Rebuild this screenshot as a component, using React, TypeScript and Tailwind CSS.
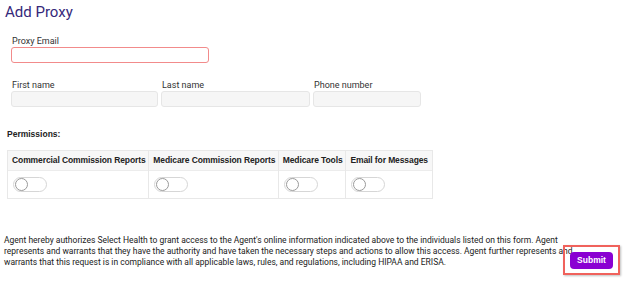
import React from "react";

function Toggle() {
  return (
    <div className="relative w-[34px] h-[15px] rounded-full border border-[#d6d6d6] bg-white">
      <div className="absolute left-[1px] top-[0px] w-[13px] h-[13px] rounded-full border border-[#9a9a9a] bg-white" />
    </div>
  );
}

export default function App() {
  const cols = [
    { name: "Commercial Commission Reports", w: "w-[141px]" },
    { name: "Medicare Commission Reports", w: "w-[130px]" },
    { name: "Medicare Tools", w: "w-[68px]" },
    { name: "Email for Messages", w: "w-[87px]" },
  ];
  return (
    <div className="w-[624px] h-[282px] bg-white relative overflow-hidden text-[#222]" style={{ fontFamily: "Roboto, 'Liberation Sans', sans-serif" }}>
      <div className="pl-[5px] pt-[2px] text-[15px] leading-[20px] text-[#35287a]">Add Proxy</div>

      <div className="ml-[11px] mt-[14px]">
        <div className="text-[9px] leading-[11px] ml-[1px] text-[#333]">Proxy Email</div>
        <div className="w-[198px] h-[16px] rounded-[3px] border border-[#f28b8b] bg-white" />
      </div>

      <div className="ml-[11px] mt-[17px] flex gap-[3px]">
        <div>
          <div className="text-[9px] leading-[11px] ml-[1px] text-[#333]">First name</div>
          <div className="w-[147px] h-[16px] rounded-[3px] border border-[#e6e6e6] bg-[#f6f6f6]" />
        </div>
        <div>
          <div className="text-[9px] leading-[11px] ml-[1px] text-[#333]">Last name</div>
          <div className="w-[149px] h-[16px] rounded-[3px] border border-[#e6e6e6] bg-[#f6f6f6]" />
        </div>
        <div>
          <div className="text-[9px] leading-[11px] ml-[1px] text-[#333]">Phone number</div>
          <div className="w-[108px] h-[16px] rounded-[3px] border border-[#e6e6e6] bg-[#f6f6f6]" />
        </div>
      </div>

      <div className="ml-[7px] mt-[22px] text-[8.5px] leading-[11px] font-bold text-[#222]" style={{ fontFamily: "'Liberation Sans', Arial, sans-serif" }}>Permissions:</div>

      <div className="ml-[7px] mt-[10px] w-[426px] border border-[#e8e8e8] flex" style={{ fontFamily: "'Liberation Sans', Arial, sans-serif" }}>
        {cols.map((c, i) => (
          <div key={c.name} className={`${c.w} ${i > 0 ? "border-l border-[#e8e8e8]" : ""} flex flex-col`}>
            <div className="h-[20px] bg-[#f7f7f7] border-b border-[#ececec] flex items-center pl-[4px] text-[8.5px] font-bold text-[#222] whitespace-nowrap tracking-[-0.1px]">{c.name}</div>
            <div className="h-[27px] flex items-center pl-[5px]">
              <Toggle />
            </div>
          </div>
        ))}
      </div>

      <p className="ml-[4px] mt-[36px] w-[596px] text-[8.5px] leading-[11px] text-[#222]">
        Agent hereby authorizes Select Health to grant access to the Agent's online information indicated above to the individuals listed on this form. Agent represents and warrants that they have the authority and have taken the necessary steps and actions to allow this access. Agent further represents and warrants that this request is in compliance with all applicable laws, rules, and regulations, including HIPAA and ERISA.
      </p>

      <div className="absolute left-[563px] top-[245px] w-[57px] h-[30px] border-2 border-[#f0625c] flex items-center justify-center shadow-[1px_1px_2px_rgba(0,0,0,0.25)]">
        <button className="w-[43px] h-[17px] rounded-[4px] bg-[#8a00d2] text-white text-[8.5px] font-bold" style={{ fontFamily: "'Liberation Sans', Arial, sans-serif" }}>Submit</button>
      </div>
    </div>
  );
}
